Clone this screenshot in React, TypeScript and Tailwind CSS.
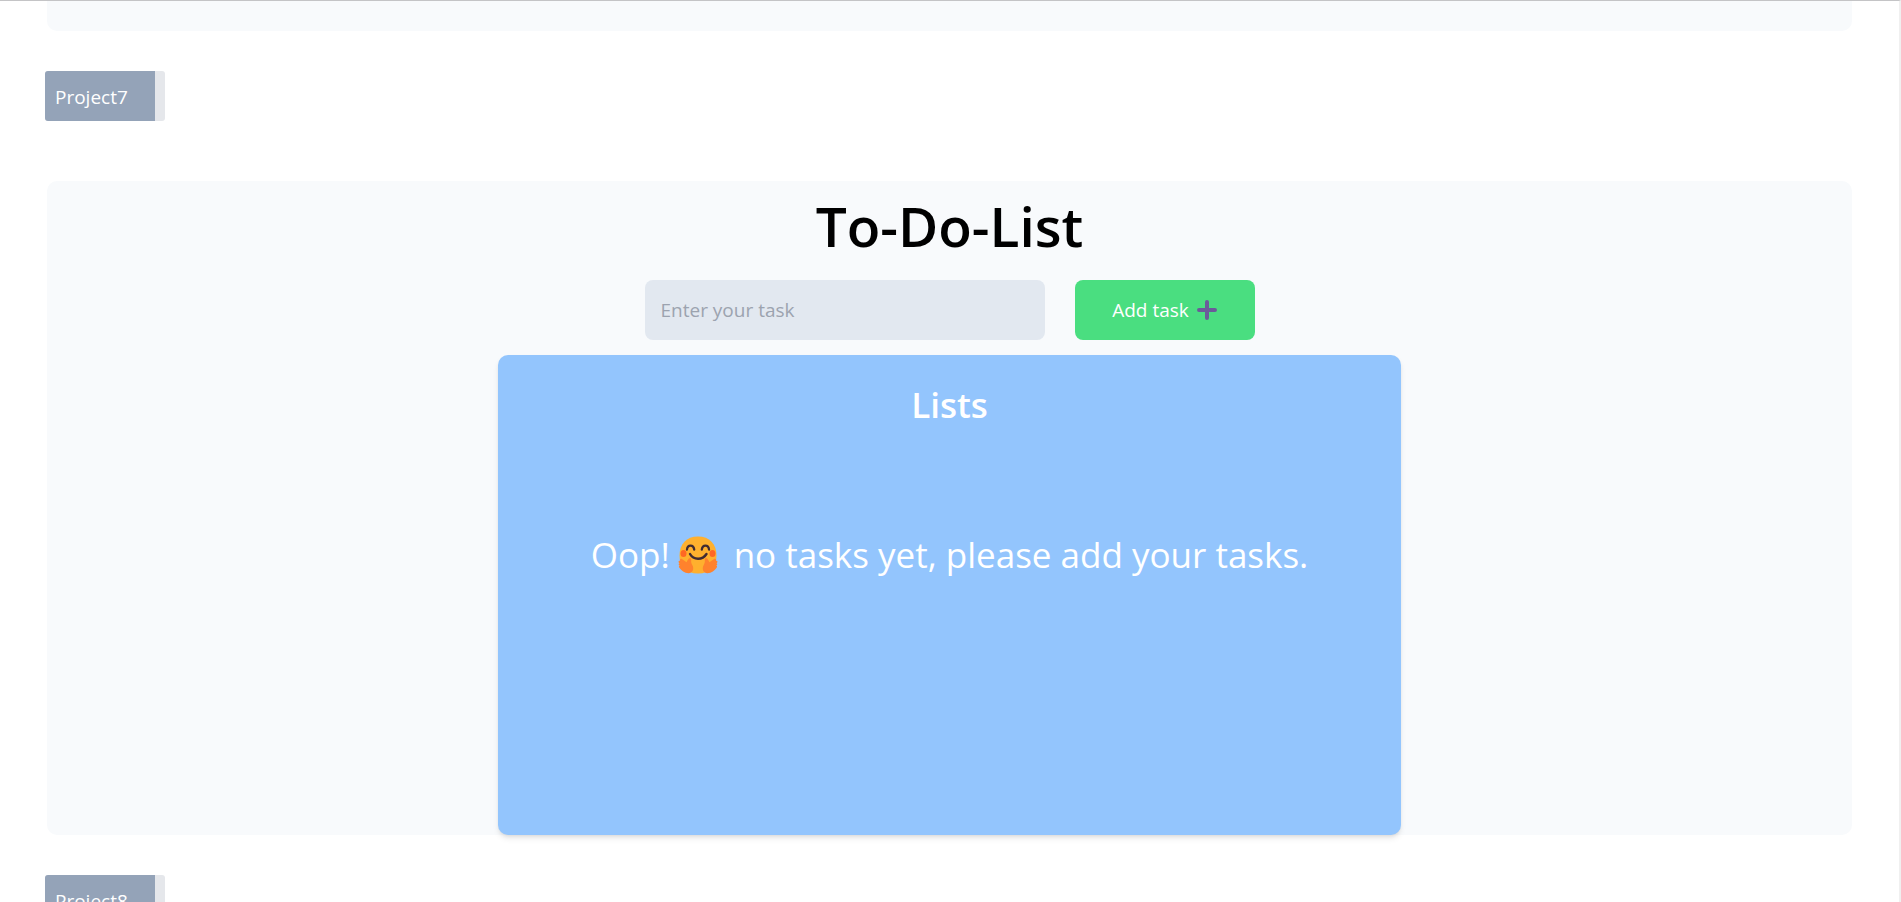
import { useState } from "react";

function PlusIcon() {
  return (
    <svg viewBox="0 0 20 20" className="size-5 shrink-0" aria-hidden="true">
      <path
        d="M10 2V18M2 10H18"
        stroke="#6b5a9a"
        strokeWidth="4"
        strokeLinecap="round"
        fill="none"
      />
    </svg>
  );
}

function HuggingFace() {
  return (
    <svg viewBox="0 0 40 38" className="h-[38px] w-10 shrink-0" role="img" aria-label="Hugging face">
      <path
        d="M20 0.5C8.5 0.5 1.5 8 1.5 19.5C1.5 30 8 37.5 20 37.5C32 37.5 38.5 30 38.5 19.5C38.5 8 31.5 0.5 20 0.5Z"
        fill="#ffb02e"
      />
      <ellipse cx="5.5" cy="17.5" rx="3" ry="3.5" fill="#ff6723" />
      <ellipse cx="34.5" cy="17.5" rx="3" ry="3.5" fill="#ff6723" />
      <path
        d="M9 13.5C9.5 8.3 15.5 8.3 16.2 13.5M23.8 13.5C24.5 8.3 30.5 8.3 31 13.5"
        stroke="#402a32"
        strokeWidth="2.3"
        strokeLinecap="round"
        fill="none"
      />
      <path
        d="M12 18C15.5 24.3 24.5 24.3 28.5 18"
        stroke="#402a32"
        strokeWidth="2.4"
        strokeLinecap="round"
        fill="none"
      />
      <g fill="#ff822d">
        <path
          id="hug-hand"
          d="M10.5 37.3C6.5 37 3.3 34.8 1.4 31.8C0.6 30.5 0.8 30 1.8 30C0.4 28.8 0.3 27.6 1.5 27.3C0 26 0.3 24.6 1.9 24.7C1.6 22.8 3 22.2 4.3 23.2L8.5 26.3C9 25.5 9.8 23.5 10.8 22.5C12.2 21.3 13.4 22.3 13.2 24C13 26 13.4 27.5 14.4 29.3C16.3 32.8 15 37 10.5 37.3Z"
        />
        <use href="#hug-hand" transform="matrix(-1 0 0 1 40 0)" />
      </g>
    </svg>
  );
}

function ProjectTag({ name }: { name: string }) {
  return (
    <h2 className="mx-[45px] w-[120px] overflow-hidden rounded-[3px] bg-[#e5e7eb]">
      <span className="block h-[50px] w-[110px] bg-[#94a3b8] px-2.5 text-[19px] leading-[52px] text-white">
        {name}
      </span>
    </h2>
  );
}

function TodoList() {
  const [draft, setDraft] = useState("");
  const [tasks, setTasks] = useState<string[]>([]);

  const addTask = (event: React.FormEvent) => {
    event.preventDefault();
    if (!draft.trim()) return;
    setTasks([...tasks, draft.trim()]);
    setDraft("");
  };

  return (
    <section className="mx-[47px] flex flex-col items-center rounded-[10px] bg-[#f8fafc]">
      <h1 className="pt-[15px] text-[55px] leading-[60px] font-semibold text-black">To-Do-List</h1>
      <form onSubmit={addTask} className="mt-6 flex gap-[30px]">
        <input
          aria-label="Task"
          value={draft}
          onChange={(event) => setDraft(event.target.value)}
          placeholder="Enter your task"
          className="h-[60px] w-[400px] rounded-lg bg-[#e2e8f0] px-4 text-[19px] text-gray-800 outline-none placeholder:text-[#9ca3af]"
        />
        <button
          type="submit"
          className="flex h-[60px] w-[180px] items-center justify-center gap-2 rounded-lg bg-[#4ade80] text-[19px] text-white"
        >
          Add task
          <PlusIcon />
        </button>
      </form>
      <div className="mt-[15px] min-h-[480px] w-1/2 rounded-[10px] bg-[#93c5fd] text-center text-white shadow-md">
        <h2 className="pt-[25px] text-[35px] leading-[50px] font-semibold">Lists</h2>
        {tasks.length === 0 ? (
          <p className="mt-[100px] flex items-center justify-center text-[35px] leading-[50px] whitespace-nowrap">
            Oop!
            <span className="mr-4 ml-2">
              <HuggingFace />
            </span>
            no tasks yet, please add your tasks.
          </p>
        ) : (
          <ul className="mt-6 text-2xl">
            {tasks.map((task, index) => (
              <li key={index}>{task}</li>
            ))}
          </ul>
        )}
      </div>
    </section>
  );
}

export default function App() {
  return (
    <main className="h-screen overflow-hidden border-t border-r-2 border-t-[#c4c4c6] border-r-[#f0f0f0] bg-white font-['Open_Sans','Noto_Sans',sans-serif]">
      <div className="mx-[47px] h-[30px] rounded-b-[10px] bg-[#f8fafc]" />
      <div className="mt-10 mb-[60px]">
        <ProjectTag name="Project7" />
      </div>
      <TodoList />
      <div className="mt-10">
        <ProjectTag name="Project8" />
      </div>
    </main>
  );
}
